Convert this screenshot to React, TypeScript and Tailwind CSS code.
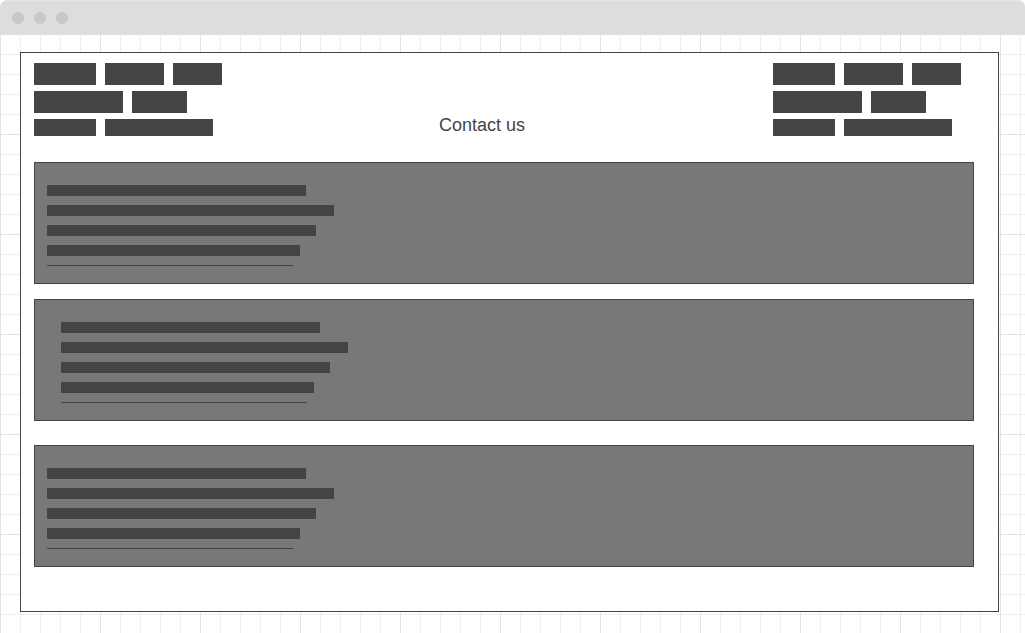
const rows = [
  [62, 59, 49],
  [89, 55],
  [62, 108],
];

const bars = [259, 287, 269, 253];

const BlockGroup = () => (
  <div className="flex flex-col gap-[6px]">
    {rows.map((row, i) => (
      <div key={i} className="flex gap-[9px]">
        {row.map((w, j) => (
          <div
            key={j}
            className={i === 2 ? "h-[17px] bg-[#444444]" : "h-[22px] bg-[#444444]"}
            style={{ width: w }}
          ></div>
        ))}
      </div>
    ))}
  </div>
);

const Panel = ({ inset, className }: { inset?: boolean; className: string }) => (
  <div
    className={`w-[940px] h-[122px] border border-[#444444] bg-[#787878] pt-[22px] ${
      inset ? "pl-[26px]" : "pl-[12px]"
    } ${className}`}
  >
    <div className="flex flex-col gap-[9px]">
      {bars.map((w, i) => (
        <div key={i} className="h-[11px] bg-[#444444]" style={{ width: w }}></div>
      ))}
      <div className="h-[1px] w-[246px] bg-[#444444]"></div>
    </div>
  </div>
);

export default function App() {
  return (
    <div className="w-full h-[633px] bg-white flex flex-col font-['Liberation_Sans',Arial,sans-serif] overflow-hidden">
      {/* window chrome */}
      <div className="h-[34px] shrink-0 bg-[#dddddd] rounded-t-[7px] border-t border-[#e6e6e6] flex items-center gap-[10px] pl-[12px]">
        <div className="w-3 h-3 rounded-full bg-[#c8c8c8]"></div>
        <div className="w-3 h-3 rounded-full bg-[#c8c8c8]"></div>
        <div className="w-3 h-3 rounded-full bg-[#c8c8c8]"></div>
      </div>

      {/* grid canvas */}
      <div className="flex-1 pl-[20px] pt-[18px] bg-[linear-gradient(to_right,#e2e2e2_1px,transparent_1px),linear-gradient(to_bottom,#e2e2e2_1px,transparent_1px),linear-gradient(to_right,#eeeeee_1px,transparent_1px),linear-gradient(to_bottom,#eeeeee_1px,transparent_1px)] bg-[size:100px_100px,100px_100px,20px_20px,20px_20px]">
        <div className="w-[979px] h-[560px] border border-[#444444] bg-white pt-[10px] pl-[13px]">
          {/* header */}
          <div className="flex">
            <div className="w-[188px]">
              <BlockGroup />
            </div>
            <div className="w-[520px] pt-[52px] text-center text-[18px] leading-[21px] text-[#444444]">
              Contact us
            </div>
            <div className="ml-[31px]">
              <BlockGroup />
            </div>
          </div>

          <Panel className="mt-[26px]" />
          <Panel inset className="mt-[15px]" />
          <Panel className="mt-[24px]" />
        </div>
      </div>
    </div>
  );
}
